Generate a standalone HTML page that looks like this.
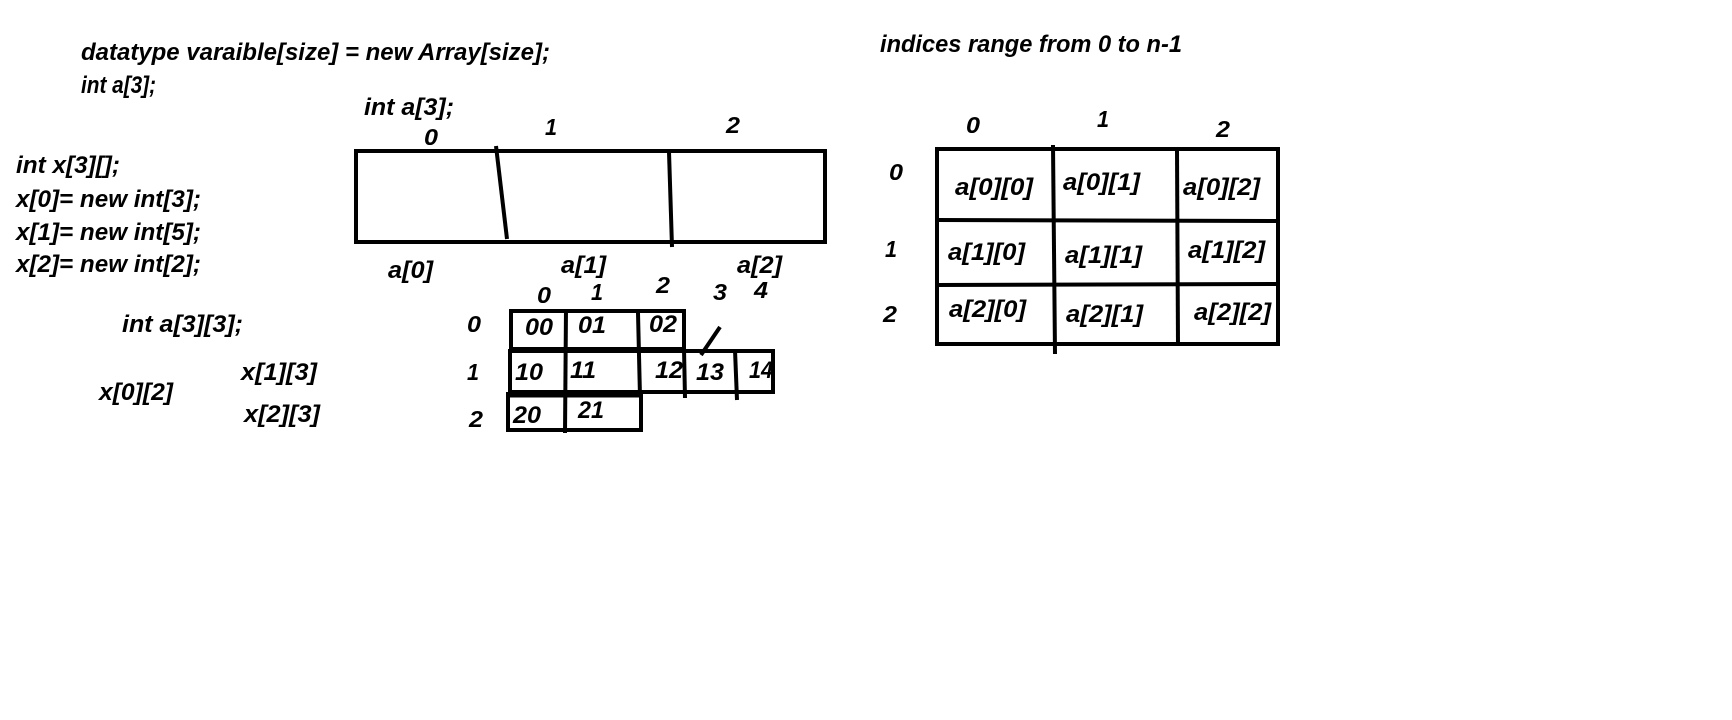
<!DOCTYPE html>
<html><head><meta charset="utf-8"><style>
html,body{margin:0;padding:0;background:#fff;}
svg{display:block;}
text{font-family:"Liberation Sans",sans-serif;font-weight:bold;font-style:italic;font-size:24px;fill:#000;}
.d{font-size:23px;}
</style></head><body>
<svg width="1732" height="720" viewBox="0 0 1732 720" xmlns="http://www.w3.org/2000/svg">
<rect width="1732" height="720" fill="#fff"/>
<g>
<text x="81" y="60" textLength="469" lengthAdjust="spacingAndGlyphs">datatype varaible[size] = new Array[size];</text>
<text x="81" y="93" textLength="75" lengthAdjust="spacingAndGlyphs">int a[3];</text>
<text x="364" y="115" textLength="90" lengthAdjust="spacingAndGlyphs">int a[3];</text>
<text class="d" x="424" y="145" textLength="14" lengthAdjust="spacingAndGlyphs">0</text>
<text class="d" x="545" y="135" textLength="12" lengthAdjust="spacingAndGlyphs">1</text>
<text class="d" x="726" y="133" textLength="14" lengthAdjust="spacingAndGlyphs">2</text>
<text x="16" y="173" textLength="104" lengthAdjust="spacingAndGlyphs">int x[3][];</text>
<text x="16" y="207" textLength="185" lengthAdjust="spacingAndGlyphs">x[0]= new int[3];</text>
<text x="16" y="240" textLength="185" lengthAdjust="spacingAndGlyphs">x[1]= new int[5];</text>
<text x="16" y="272" textLength="185" lengthAdjust="spacingAndGlyphs">x[2]= new int[2];</text>
<text x="388" y="278" textLength="45" lengthAdjust="spacingAndGlyphs">a[0]</text>
<text x="561" y="273" textLength="45" lengthAdjust="spacingAndGlyphs">a[1]</text>
<text x="737" y="273" textLength="45" lengthAdjust="spacingAndGlyphs">a[2]</text>
<text class="d" x="537" y="303" textLength="14" lengthAdjust="spacingAndGlyphs">0</text>
<text class="d" x="591" y="300" textLength="12" lengthAdjust="spacingAndGlyphs">1</text>
<text class="d" x="656" y="293" textLength="14" lengthAdjust="spacingAndGlyphs">2</text>
<text class="d" x="713" y="300" textLength="14" lengthAdjust="spacingAndGlyphs">3</text>
<text class="d" x="754" y="298" textLength="14" lengthAdjust="spacingAndGlyphs">4</text>
<text x="122" y="332" textLength="121" lengthAdjust="spacingAndGlyphs">int a[3][3];</text>
<text class="d" x="467" y="332" textLength="14" lengthAdjust="spacingAndGlyphs">0</text>
<text class="d" x="467" y="380" textLength="12" lengthAdjust="spacingAndGlyphs">1</text>
<text class="d" x="469" y="427" textLength="14" lengthAdjust="spacingAndGlyphs">2</text>
<text x="241" y="380" textLength="76" lengthAdjust="spacingAndGlyphs">x[1][3]</text>
<text x="244" y="422" textLength="76" lengthAdjust="spacingAndGlyphs">x[2][3]</text>
<text x="99" y="400" textLength="74" lengthAdjust="spacingAndGlyphs">x[0][2]</text>
<text x="525" y="335" textLength="28" lengthAdjust="spacingAndGlyphs">00</text>
<text x="578" y="333" textLength="28" lengthAdjust="spacingAndGlyphs">01</text>
<text x="649" y="332" textLength="28" lengthAdjust="spacingAndGlyphs">02</text>
<text x="515" y="380" textLength="28" lengthAdjust="spacingAndGlyphs">10</text>
<text x="570" y="378" textLength="26" lengthAdjust="spacingAndGlyphs">11</text>
<text x="655" y="378" textLength="28" lengthAdjust="spacingAndGlyphs">12</text>
<text x="696" y="380" textLength="28" lengthAdjust="spacingAndGlyphs">13</text>
<text x="749" y="378" textLength="24" lengthAdjust="spacingAndGlyphs">14</text>
<text x="513" y="423" textLength="28" lengthAdjust="spacingAndGlyphs">20</text>
<text x="578" y="418" textLength="26" lengthAdjust="spacingAndGlyphs">21</text>

<text x="880" y="52" textLength="302" lengthAdjust="spacingAndGlyphs">indices range from 0 to n-1</text>
<text class="d" x="966" y="133" textLength="14" lengthAdjust="spacingAndGlyphs">0</text>
<text class="d" x="1097" y="127" textLength="12" lengthAdjust="spacingAndGlyphs">1</text>
<text class="d" x="1216" y="137" textLength="14" lengthAdjust="spacingAndGlyphs">2</text>
<text class="d" x="889" y="180" textLength="14" lengthAdjust="spacingAndGlyphs">0</text>
<text class="d" x="885" y="257" textLength="12" lengthAdjust="spacingAndGlyphs">1</text>
<text class="d" x="883" y="322" textLength="14" lengthAdjust="spacingAndGlyphs">2</text>
<text x="955" y="195" textLength="78" lengthAdjust="spacingAndGlyphs">a[0][0]</text>
<text x="1063" y="190" textLength="77" lengthAdjust="spacingAndGlyphs">a[0][1]</text>
<text x="1183" y="195" textLength="77" lengthAdjust="spacingAndGlyphs">a[0][2]</text>
<text x="948" y="260" textLength="77" lengthAdjust="spacingAndGlyphs">a[1][0]</text>
<text x="1065" y="263" textLength="77" lengthAdjust="spacingAndGlyphs">a[1][1]</text>
<text x="1188" y="258" textLength="77" lengthAdjust="spacingAndGlyphs">a[1][2]</text>
<text x="949" y="317" textLength="77" lengthAdjust="spacingAndGlyphs">a[2][0]</text>
<text x="1066" y="322" textLength="77" lengthAdjust="spacingAndGlyphs">a[2][1]</text>
<text x="1194" y="320" textLength="77" lengthAdjust="spacingAndGlyphs">a[2][2]</text>
</g>
<g stroke="#000" fill="none" stroke-width="4">
<rect x="356" y="151" width="469" height="91"/>
<line x1="496" y1="146" x2="507" y2="239"/>
<line x1="669" y1="152" x2="672" y2="247"/>

<rect x="511" y="311" width="173" height="38"/>
<line x1="566" y1="309" x2="565" y2="433"/>
<line x1="638" y1="313" x2="640" y2="397"/>
<rect x="510" y="351" width="263" height="41"/>
<line x1="684" y1="349" x2="685" y2="398"/>
<line x1="735" y1="350" x2="737" y2="400"/>
<rect x="508" y="394" width="133" height="36"/>
<line x1="510" y1="394" x2="641" y2="394" stroke-width="7"/>
<line x1="720" y1="327" x2="701" y2="355"/>

<rect x="937" y="149" width="341" height="195"/>
<line x1="1053" y1="145" x2="1055" y2="354"/>
<line x1="1177" y1="150" x2="1178" y2="345"/>
<line x1="937" y1="220" x2="1278" y2="221"/>
<line x1="937" y1="285" x2="1278" y2="284"/>
</g>
</svg>
</body></html>
